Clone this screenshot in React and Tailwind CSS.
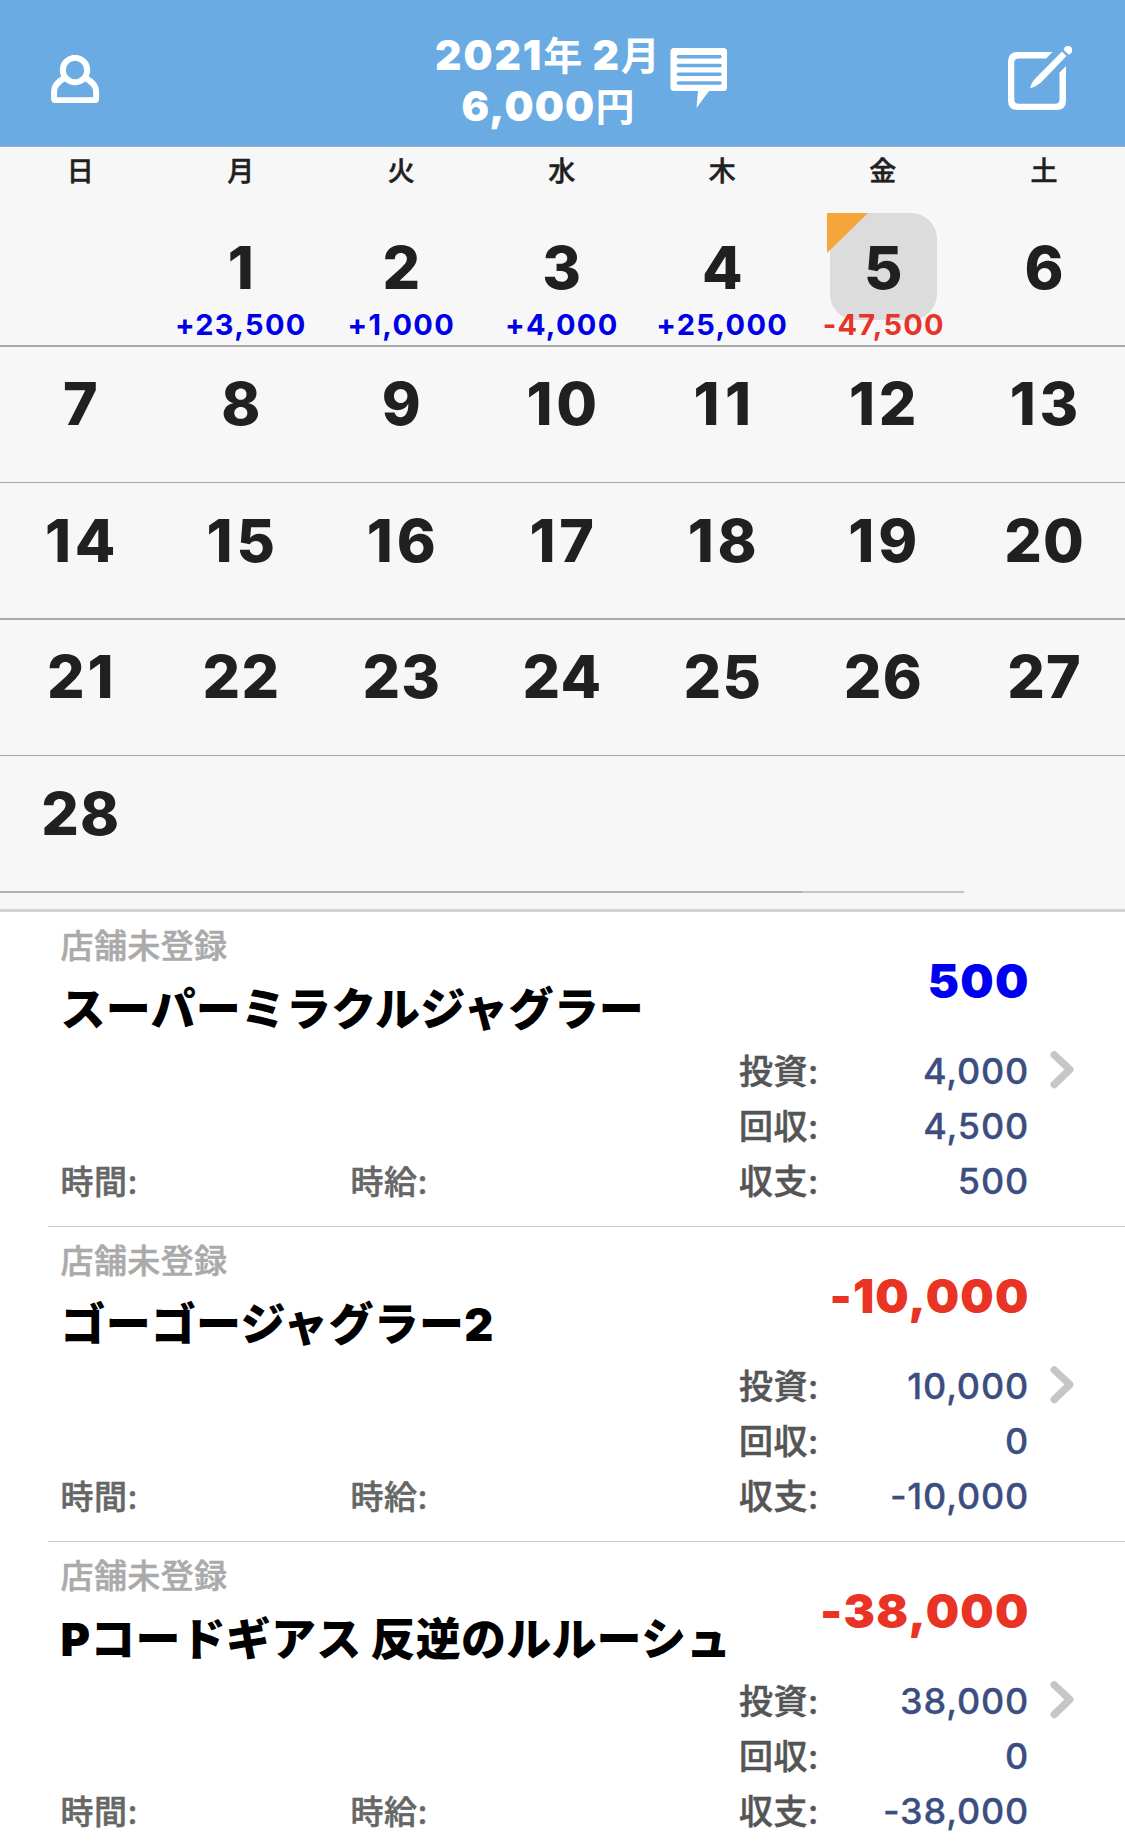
import React from 'react';

const WEEKDAYS = ['日', '月', '火', '水', '木', '金', '土'];
const COLS = 'grid grid-cols-[repeat(6,160.5px)_1fr]';

const AMOUNTS = { 1: '+23,500', 2: '+1,000', 3: '+4,000', 4: '+25,000', 5: '-47,500' };

const WEEKS = [
  { days: [null, 1, 2, 3, 4, 5, 6], row: 'h-[138px] border-b-2 pt-[4px]' },
  { days: [7, 8, 9, 10, 11, 12, 13], row: 'h-[136px] border-b pt-[2px]' },
  { days: [14, 15, 16, 17, 18, 19, 20], row: 'h-[137px] border-b-2 pt-[3px]' },
  { days: [21, 22, 23, 24, 25, 26, 27], row: 'h-[136px] border-b pt-[2px]' },
  { days: [28, null, null, null, null, null, null], row: 'h-[135px] pt-[3px]' },
];

const RECORDS = [
  { name: 'スーパーミラクルジャグラー', total: '500', invest: '4,000', payout: '4,500', net: '500' },
  { name: 'ゴーゴージャグラー2', total: '-10,000', invest: '10,000', payout: '0', net: '-10,000' },
  { name: 'Pコードギアス 反逆のルルーシュ', total: '-38,000', invest: '38,000', payout: '0', net: '-38,000' },
];

function PersonIcon() {
  return (
    <svg className="mt-[55px] h-[48px] w-[49px]" viewBox="0 0 49 48" fill="none" stroke="#fff" strokeWidth="6">
      <circle cx="24" cy="15" r="12.2" />
      <path d="M13.500 23C8 26 3.100 30 3.100 36.500V43.500Q3.100 45.200 4.800 45.200H43.400Q45.100 45.200 45.100 43.500V36.500C45.100 30 40 26 34.500 23" />
    </svg>
  );
}

function CommentIcon() {
  return (
    <svg className="mt-[48px] h-[60px] w-[58px]" viewBox="0 0 58 60">
      <path d="M4 0H53.500Q57 0 57 3.500V39.500Q57 43 53.500 43H39L26.500 60L28 43H4Q.5 43 .5 39.500V3.500Q.5 0 4 0Z" fill="#fff" />
      <path d="M8.500 8.800H50M8.500 17.500H50M8.500 26.200H50M8.500 35H50" stroke="#69abe2" strokeWidth="3.600" strokeLinecap="round" />
    </svg>
  );
}

function ComposeIcon() {
  return (
    <svg className="mt-[45px] h-[66px] w-[65px]" viewBox="0 0 65 66">
      <path
        d="M44.500 7H9.500Q0 7 0 16.500V55.500Q0 65 9.500 65H48.500Q58 65 58 55.500V21L51.500 27.500V54.500Q51.500 58.700 47.300 58.700H10.700Q6.300 58.700 6.300 54.500V17.700Q6.300 13.500 10.700 13.500H38Z"
        fill="#fff"
      />
      <path d="M54 6.500L58.500 11L33 37.500Q28.500 41.500 22 43.500Q23.500 37 28 32.700Z" fill="#fff" />
      <path d="M55.800 5A4.200 4.200 0 1 1 60.400 9.400Z" fill="#fff" />
    </svg>
  );
}

function Chevron() {
  return (
    <svg className="h-[38px] w-[24px]" viewBox="0 0 24 38" fill="none" stroke="#c6c6c8" strokeWidth="7.400" strokeLinecap="round" strokeLinejoin="round">
      <path d="M4.200 3.900L19.800 18.500L4.200 33.500" />
    </svg>
  );
}

function Header() {
  return (
    <header className="flex h-[147px] shrink-0 border-b border-[#a3adb8] bg-[#69abe2] text-white">
      <div className="w-[434px] pl-[51px]">
        <PersonIcon />
      </div>
      <div className="w-[224px] pt-[30px] text-center text-[41px] leading-[50px] font-black whitespace-nowrap">
        <div className="pl-px tracking-[1.9px]">
          2021<span className="text-[39px] font-bold tracking-normal">年</span> 2
          <span className="text-[39px] font-bold tracking-normal">月</span>
        </div>
        <div className="pl-[4px] tracking-[1.2px]">
          6,000<span className="text-[39px] font-bold tracking-normal">円</span>
        </div>
      </div>
      <div className="w-[350px] pl-[12px]">
        <CommentIcon />
      </div>
      <ComposeIcon />
    </header>
  );
}

function dayTracking(day) {
  if (day === 11) return '-mr-[5.5px] tracking-[5.5px]';
  if (day >= 10 && day < 20) return '-mr-[3.8px] tracking-[3.8px]';
  if (day === 21) return '-mr-[2.8px] tracking-[2.8px]';
  return '-mr-[1.3px] tracking-[1.3px]';
}

function Day({ day }) {
  const amount = AMOUNTS[day];
  const selected = day === 5;
  return (
    <div className="flex flex-col items-center">
      <div
        className={
          selected
            ? 'relative ml-px flex h-[107px] w-[107px] shrink-0 justify-center rounded-[26px] bg-[#dcdcdc]'
            : 'flex h-[107px] shrink-0 justify-center'
        }
      >
        {selected && (
          <svg className="absolute top-0 -left-[3px] h-[40px] w-[41px]" viewBox="0 0 41 40">
            <path d="M0 0H41L0 40Z" fill="#f4a63a" />
          </svg>
        )}
        <span
          className={`relative pt-[25px] text-[59px] leading-[59px] font-extrabold text-[#202020] ${dayTracking(day)}`}
        >
          {day}
        </span>
      </div>
      {amount && (
        <span
          className={
            amount[0] === '-'
              ? 'relative -mt-[10px] ml-[2px] text-[29px] leading-[30px] font-bold tracking-[1.2px] text-[#e5352b]'
              : 'relative -mt-[10px] text-[29px] leading-[30px] font-bold tracking-[1.3px] text-[#0000e6]'
          }
        >
          {amount}
        </span>
      )}
    </div>
  );
}

function Calendar() {
  return (
    <section className="h-[765px] shrink-0 border-b-3 border-[#d2d2d2] bg-[#f7f7f7]">
      <div
        className={`${COLS} h-[62px] pt-[9px] text-center text-[27px] leading-[32px] font-medium text-[#202020] [-webkit-text-stroke:0.5px_#202020]`}
      >
        {WEEKDAYS.map((w) => (
          <div key={w}>{w}</div>
        ))}
      </div>
      {WEEKS.map((week, i) => (
        <div key={i} className={`${COLS} ${week.row} border-[#a8a8a8]`}>
          {week.days.map((d, j) => (
            <Day key={j} day={d} />
          ))}
        </div>
      ))}
      <div className="flex h-[2px]">
        <div className="w-[802px] bg-[#b0b0b0]" />
        <div className="w-[162px] bg-[#c4c4c4]" />
      </div>
    </section>
  );
}

function Figure({ label, value }) {
  return (
    <div className="flex h-[55px] items-center justify-between leading-[55px]">
      <span className="text-[34px] font-medium tracking-[0.5px] text-[#555] [-webkit-text-stroke:0.5px_#555]">{label}</span>
      <span className="-mr-[2px] text-[36px] font-medium tracking-[0.8px] text-[#3c4d80] [-webkit-text-stroke:0.3px_#3c4d80]">
        {value}
      </span>
    </div>
  );
}

function Record({ r }) {
  return (
    <article className="flex h-[315px] shrink-0 pl-[48px]">
      <div className="flex w-full border-b border-[#c8c8c8]">
        <div className="flex w-[691px] flex-col pl-[12.5px] whitespace-nowrap">
          <div className="mt-[14px] text-[33px] leading-[40px] font-medium tracking-[0.4px] text-[#aaa] [-webkit-text-stroke:0.5px_#aaa]">
            店舗未登録
          </div>
          <div className="mt-[14px] text-[45px] leading-[60px] font-black tracking-[0.2px] text-black">{r.name}</div>
          <div className="mt-[122px] flex text-[33px] leading-[40px] font-medium tracking-[0.5px] text-[#666] [-webkit-text-stroke:0.5px_#666]">
            <span className="w-[290px]">時間:</span>
            <span>時給:</span>
          </div>
        </div>
        <div className="w-[288px]">
          <div
            className={
              r.total[0] === '-'
                ? '-mr-[2.5px] mt-[39px] mb-[33px] text-right text-[47px] leading-[60px] font-black tracking-[1.2px] text-[#e93325]'
                : '-mr-[2.5px] mt-[39px] mb-[33px] text-right text-[47px] leading-[60px] font-black tracking-[1.2px] text-[#0000f0]'
            }
          >
            {r.total}
          </div>
          <Figure label="投資:" value={r.invest} />
          <Figure label="回収:" value={r.payout} />
          <Figure label="収支:" value={r.net} />
        </div>
        <div className="pt-[139px] pl-[23px]">
          <Chevron />
        </div>
      </div>
    </article>
  );
}

export default function App() {
  return (
    <main
      lang="ja"
      className="flex h-[1841px] w-[1125px] flex-col overflow-hidden bg-white font-['Inter','Noto_Sans_CJK_JP',sans-serif]"
    >
      <Header />
      <Calendar />
      {RECORDS.map((r) => (
        <Record key={r.name} r={r} />
      ))}
    </main>
  );
}
